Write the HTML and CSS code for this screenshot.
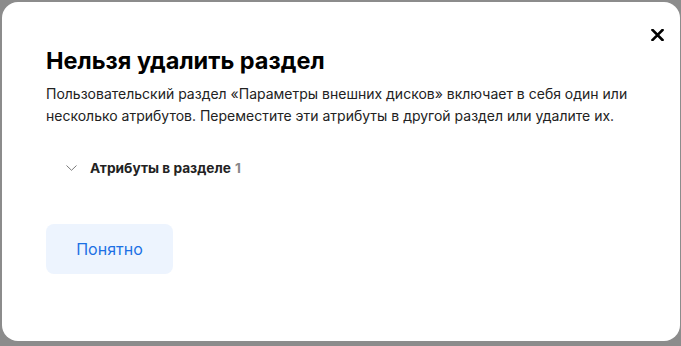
FILE: index.html
```html
<!DOCTYPE html>
<html lang="ru">
<head>
  <meta charset="UTF-8" />
  <title>Нельзя удалить раздел</title>
  <link rel="stylesheet" href="styles.css">
</head>
<body>
  <div class="dialog">
    <button class="close" aria-label="Закрыть">
      <svg width="13" height="12" viewBox="0 0 13 12"><path d="M1.5 1 L11.5 11 M11.5 1 L1.5 11" stroke="#000" stroke-width="2.6" stroke-linecap="square"/></svg>
    </button>
    <h1>Нельзя удалить раздел</h1>
    <p class="text">Пользовательский раздел «Параметры внешних дисков» включает в себя один или несколько атрибутов. Переместите эти атрибуты в другой раздел или удалите их.</p>
    <div class="attrs">
      <svg width="11" height="6" viewBox="0 0 11 6"><path d="M0.5 0.5 L5.5 5.3 L10.5 0.5" fill="none" stroke="#7a7a7a" stroke-width="1"/></svg>
      <span class="attrs-title">Атрибуты в разделе</span>
      <span class="count">1</span>
    </div>
    <button class="ok">Понятно</button>
  </div>
</body>
</html>
```

FILE: styles.css
```css
body {
  margin: 0;
  padding: 2px 1px 5px 2px;
  background: #8c8c8c;
  font-family: Inter, "Noto Sans", sans-serif;
}

.dialog {
  position: relative;
  height: 339px;
  box-sizing: border-box;
  background: #fff;
  border-radius: 16px;
  padding: 43px 40px 0 44px;
}

.close {
  position: absolute;
  top: 27px;
  right: 16px;
  background: none;
  border: none;
  padding: 0;
  cursor: pointer;
}

h1 {
  margin: 0;
  font-size: 23.5px;
  font-weight: 700;
  color: #000;
  line-height: 32px;
}

.text {
  margin: 6px 0 0;
  font-size: 14px;
  line-height: 22px;
  color: #222;
}

.attrs {
  display: flex;
  align-items: center;
  margin: 33px 0 0 20px;
  font-size: 13.7px;
  font-weight: 700;
  color: #222;
}

.attrs svg {
  margin-right: 13px;
}

.count {
  margin-left: 4px;
  color: #888;
}

.ok {
  margin-top: 48px;
  width: 127px;
  height: 50px;
  background: #edf4fe;
  color: #1c70e4;
  border: none;
  border-radius: 8px;
  font-family: inherit;
  font-size: 16px;
  cursor: pointer;
}
```
